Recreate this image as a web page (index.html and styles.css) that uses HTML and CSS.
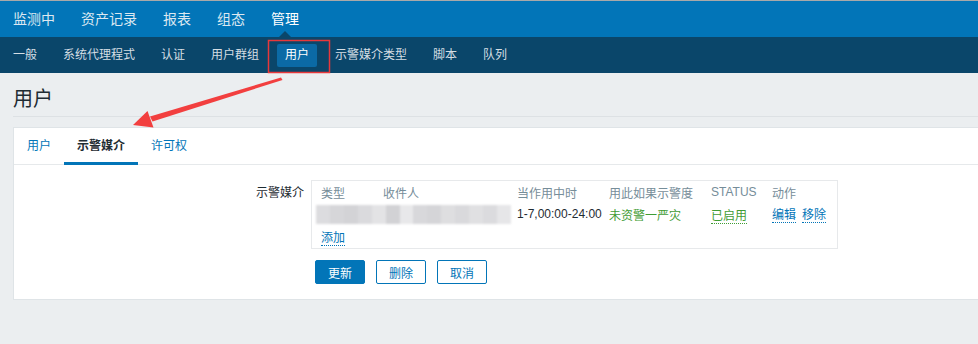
FILE: index.html
```html
<!DOCTYPE html>
<html lang="zh-CN">
<head>
<meta charset="UTF-8">
<title>用户</title>
<link rel="stylesheet" href="styles.css">
</head>
<body>

<div class="top-nav">
    <ul>
        <li><a>监测中</a></li>
        <li><a>资产记录</a></li>
        <li><a>报表</a></li>
        <li><a>组态</a></li>
        <li class="selected"><a>管理</a></li>
    </ul>
</div>

<div class="sub-nav">
    <ul>
        <li><a>一般</a></li>
        <li><a>系统代理程式</a></li>
        <li><a>认证</a></li>
        <li><a>用户群组</a></li>
        <li class="selected"><a>用户</a></li>
        <li><a>示警媒介类型</a></li>
        <li><a>脚本</a></li>
        <li><a>队列</a></li>
    </ul>
</div>

<div class="content">

    <div class="page-title">
        <h1>用户</h1>
    </div>

    <div class="card">
        <ul class="tabs">
            <li><a>用户</a></li>
            <li class="active"><a>示警媒介</a></li>
            <li><a>许可权</a></li>
        </ul>

        <div class="form">
            <div class="form-row">
                <label>示警媒介</label>
                <div class="media-table">
                    <div class="row head">
                        <span>类型</span>
                        <span>收件人</span>
                        <span>当作用中时</span>
                        <span>用此如果示警度</span>
                        <span class="latin">STATUS</span>
                        <span>动作</span>
                    </div>
                    <div class="row">
                        <span class="blurred">
                            <i></i><i></i><i></i><i></i><i></i><i></i><i></i>
                            <i></i><i></i><i></i><i></i><i></i><i></i><i></i>
                        </span>
                        <span class="period">1-7,00:00-24:00</span>
                        <span class="green">未资警一严灾</span>
                        <span><a class="link green">已启用</a></span>
                        <span class="actions"><a class="link">编辑</a><a class="link">移除</a></span>
                    </div>
                    <div class="row">
                        <span><a class="link">添加</a></span>
                    </div>
                </div>
            </div>

            <div class="buttons">
                <button class="primary">更新</button>
                <button>删除</button>
                <button>取消</button>
            </div>
        </div>
    </div>

</div>

<!-- annotation drawn over the screenshot -->
<svg class="annotations" width="978" height="344" viewBox="0 0 978 344">
    <rect x="268.5" y="40.5" width="61" height="32" fill="none" stroke="#e8383b" stroke-width="1.5"/>
    <polygon points="281,77.5 282.5,80 152.5,121.5 150,116.5" fill="#f23f3f"/>
    <polygon points="133,125 147.5,111 153.5,127.5" fill="#f23f3f"/>
</svg>

</body>
</html>
```

FILE: styles.css
```css
:root{
    --blue:#0275b8;
    --dark:#0a466a;
    --text:#1f2c33;
    --muted:#768d99;
    --bg:#ebeef0;
    --border:#dfe4e7;
    --green:#3f9c34;
}

*{
    box-sizing:border-box;
}

body{
    margin:0;
    background:var(--bg);
    border-top:1px solid #a9a9a9;
    font-family:"Liberation Sans", "Noto Sans CJK SC", sans-serif;
    font-size:12px;
    color:var(--text);
    overflow:hidden;
}

ul{
    list-style:none;
    margin:0;
    padding:0;
    display:flex;
}

/* top menu */
.top-nav{
    background:var(--blue);
    height:36px;
}

.top-nav li{
    margin:0 5px;
}

.top-nav a{
    display:block;
    position:relative;
    padding:0 8px;
    line-height:36px;
    font-size:14px;
    color:#dce8f1;
}

.top-nav .selected a{
    color:#fff;
}

.top-nav .selected a::after{
    content:"";
    position:absolute;
    left:50%;
    bottom:0;
    margin-left:-6px;
    border:6px solid transparent;
    border-top:none;
    border-bottom-color:var(--dark);
}

/* sub menu */
.sub-nav{
    background:var(--dark);
    height:36px;
}

.sub-nav ul{
    height:36px;
    align-items:center;
}

.sub-nav li{
    margin:0 5px;
}

.sub-nav a{
    display:block;
    padding:0 8px;
    height:23px;
    line-height:23px;
    color:#d5dee4;
    border-radius:2px;
}

.sub-nav .selected a{
    background:#0b6aa5;
    color:#fff;
}

/* page */
.content{
    padding-left:13px;
}

.page-title{
    height:44px;
    padding-top:14px;
    border-bottom:1px solid #dde1e4;
}

.page-title h1{
    margin:0;
    font-size:20px;
    line-height:24px;
    font-weight:normal;
    color:var(--text);
}

.card{
    margin-top:10px;
    background:#fff;
    border:1px solid var(--border);
    border-right:none;
}

/* tabs */
.tabs{
    border-bottom:1px solid #e6e9eb;
}

.tabs a{
    display:block;
    position:relative;
    padding:0 13px;
    line-height:36px;
    color:var(--blue);
}

.tabs .active a{
    color:var(--text);
    font-weight:bold;
}

.tabs .active a::after{
    content:"";
    position:absolute;
    left:0;
    right:0;
    bottom:-1px;
    height:3px;
    background:var(--blue);
}

/* form */
.form{
    padding:15px 0 15px;
}

.form-row{
    display:grid;
    grid-template-columns:290px auto;
    gap:7px;
    justify-content:start;
}

.form-row label{
    text-align:right;
    line-height:22px;
    padding-top:2px;
}

.media-table{
    width:527px;
    border:1px solid #e7e9eb;
    padding:0 0 1px 9px;
}

.row{
    display:grid;
    grid-template-columns:62px 134px 92px 102px 61px auto;
    height:22px;
    align-items:center;
    white-space:nowrap;
}

.head{
    color:var(--muted);
}

.latin{
    font-size:12px;
}

.blurred{
    grid-column:1 / 3;
    display:flex;
    width:195px;
    height:19px;
    margin-left:-5px;
    filter:blur(1px);
}

.blurred i{
    flex:1;
    background:#dcdcdf;
}

.blurred i:nth-child(2){ background:#d6d6d9; }
.blurred i:nth-child(3){ background:#d3d3d6; }
.blurred i:nth-child(4){ background:#dadadd; }
.blurred i:nth-child(5){ background:#e3e3e5; }
.blurred i:nth-child(6){ background:#d2d2d5; }
.blurred i:nth-child(7){ background:#e8e8ea; }
.blurred i:nth-child(8){ background:#d8d8db; }
.blurred i:nth-child(9){ background:#d5d5d8; }
.blurred i:nth-child(10){ background:#dedee0; }
.blurred i:nth-child(11){ background:#d9d9dc; }
.blurred i:nth-child(12){ background:#e0e0e2; }
.blurred i:nth-child(13){ background:#dbdbde; }
.blurred i:nth-child(14){ background:#e6e6e8; }

.green{
    color:var(--green);
}

.link{
    color:var(--blue);
    border-bottom:1px dotted currentColor;
}

.link.green{
    color:var(--green);
}

.actions{
    display:flex;
    gap:6px;
}

/* buttons */
.buttons{
    display:flex;
    gap:11px;
    margin:11px 0 0 301px;
}

button{
    height:24px;
    padding:0 12px;
    border:1px solid var(--blue);
    border-radius:2px;
    background:#fff;
    color:var(--blue);
    font-family:inherit;
    font-size:12px;
}

button.primary{
    background:var(--blue);
    color:#fff;
}

/* annotation layer */
.annotations{
    position:absolute;
    left:0;
    top:0;
    pointer-events:none;
}
```
